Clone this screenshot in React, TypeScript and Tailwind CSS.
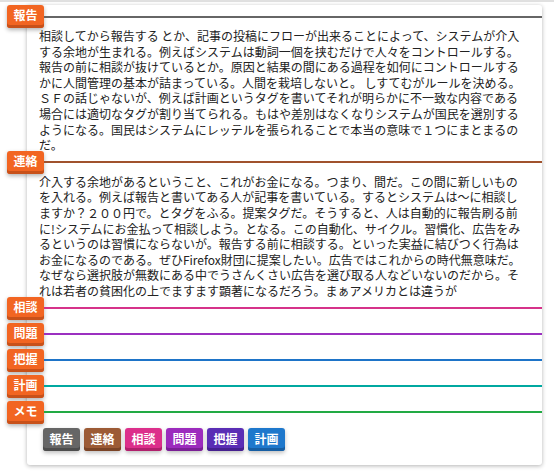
import React from "react";

type Section = { tag: string; line: string; text?: string };

const sections: Section[] = [
  {
    tag: "報告",
    line: "bg-[#666666]",
    text: "相談してから報告する とか、記事の投稿にフローが出来ることによって、システムが介入する余地が生まれる。例えばシステムは動詞一個を挟むだけで人々をコントロールする。報告の前に相談が抜けているとか。原因と結果の間にある過程を如何にコントロールするかに人間管理の基本が詰まっている。人間を栽培しないと。 しすてむがルールを決める。ＳＦの話じゃないが、例えば計画というタグを書いてそれが明らかに不一致な内容である場合には適切なタグが割り当てられる。もはや差別はなくなりシステムが国民を選別するようになる。国民はシステムにレッテルを張られることで本当の意味で１つにまとまるのだ。",
  },
  {
    tag: "連絡",
    line: "bg-[#a0522d]",
    text: "介入する余地があるということ、これがお金になる。つまり、間だ。この間に新しいものを入れる。例えば報告と書いてある人が記事を書いている。するとシステムは〜に相談しますか？２００円で。とタグをふる。提案タグだ。そうすると、人は自動的に報告刷る前に!システムにお金払って相談しよう。となる。この自動化、サイクル。習慣化、広告をみるというのは習慣にならないが。報告する前に相談する。といった実益に結びつく行為はお金になるのである。ぜひFirefox財団に提案したい。広告ではこれからの時代無意味だ。なぜなら選択肢が無数にある中でうさんくさい広告を選び取る人などいないのだから。それは若者の貧困化の上でますます顕著になるだろう。まぁアメリカとは違うが",
  },
  { tag: "相談", line: "bg-[#d6338a]" },
  { tag: "問題", line: "bg-[#9b30c0]" },
  { tag: "把握", line: "bg-[#1e74c8]" },
  { tag: "計画", line: "bg-[#00a8a0]" },
  { tag: "メモ", line: "bg-[#22aa44]" },
];

const buttons = [
  { tag: "報告", cls: "bg-[#666666] shadow-[inset_0_-3px_0_#4d4d4d,0_2px_4px_rgba(0,0,0,0.25)]" },
  { tag: "連絡", cls: "bg-[#9c5a35] shadow-[inset_0_-3px_0_#7a4326,0_2px_4px_rgba(0,0,0,0.25)]" },
  { tag: "相談", cls: "bg-[#dc2f8b] shadow-[inset_0_-3px_0_#b0206c,0_2px_4px_rgba(0,0,0,0.25)]" },
  { tag: "問題", cls: "bg-[#9c2bbd] shadow-[inset_0_-3px_0_#7a1f95,0_2px_4px_rgba(0,0,0,0.25)]" },
  { tag: "把握", cls: "bg-[#5a2db5] shadow-[inset_0_-3px_0_#45208f,0_2px_4px_rgba(0,0,0,0.25)]" },
  { tag: "計画", cls: "bg-[#1e78cc] shadow-[inset_0_-3px_0_#165ea3,0_2px_4px_rgba(0,0,0,0.25)]" },
];

function Header({ tag, line }: { tag: string; line: string }) {
  return (
    <div className="flex items-center h-[23px] -ml-[20px]">
      <span className="w-[37px] h-[23px] shrink-0 rounded-[3px] bg-[#f26522] text-white text-[12px] font-bold leading-[20px] text-center shadow-[inset_0_-3px_0_#c8511a,0_2px_4px_rgba(0,0,0,0.3)]">
        {tag}
      </span>
      <div className={`flex-1 h-[2px] ${line}`} />
    </div>
  );
}

export default function App() {
  return (
    <div
      className="min-h-screen bg-white border-t-2 border-[#e0e0e0] text-[#222222]"
      style={{ fontFamily: '"Noto Sans CJK JP", "Noto Sans", sans-serif' }}
    >
      <div className="ml-[27px] mt-[13px] w-[515px] bg-white rounded-[3px] shadow-[0_1px_4px_rgba(0,0,0,0.3)] pb-[14px]">
        <div className="-mt-[10px]">
          {sections.map((s) => (
            <section key={s.tag}>
              <Header tag={s.tag} line={s.line} />
              {s.text ? (
                <p className="pl-[12px] w-[500px] text-[12px] leading-[15.6px] -mb-[2px]">{s.text}</p>
              ) : (
                <div className="h-[3px]" />
              )}
            </section>
          ))}
        </div>
        <div className="flex gap-[4px] pl-[16px] mt-[1px]">
          {buttons.map((b) => (
            <button
              key={b.tag}
              className={`w-[37px] h-[23px] rounded-[3px] text-white text-[12px] font-bold leading-[20px] ${b.cls}`}
            >
              {b.tag}
            </button>
          ))}
        </div>
      </div>
    </div>
  );
}
